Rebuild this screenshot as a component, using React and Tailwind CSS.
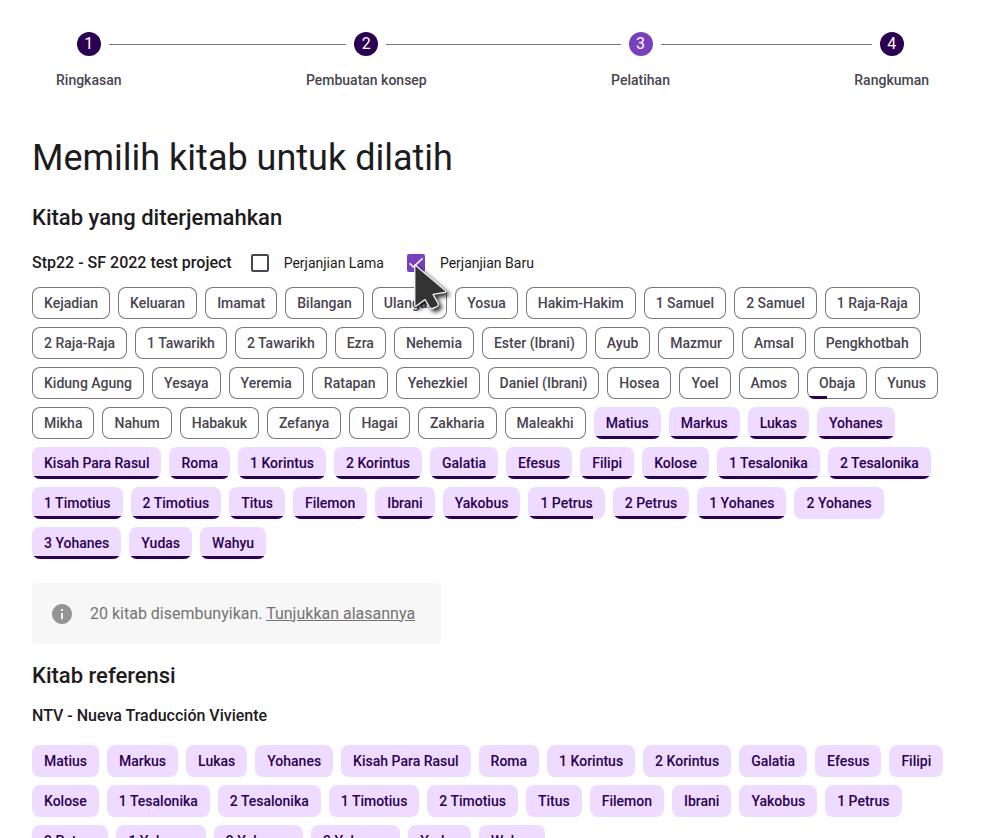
import { useState } from "react";
import { MdInfo } from "react-icons/md";

const STEPS = ["Ringkasan", "Pembuatan konsep", "Pelatihan", "Rangkuman"];
const ACTIVE_STEP = 2;

const OLD_TESTAMENT = [
  "Kejadian", "Keluaran", "Imamat", "Bilangan", "Ulangan", "Yosua", "Hakim-Hakim",
  "1 Samuel", "2 Samuel", "1 Raja-Raja", "2 Raja-Raja", "1 Tawarikh", "2 Tawarikh",
  "Ezra", "Nehemia", "Ester (Ibrani)", "Ayub", "Mazmur", "Amsal", "Pengkhotbah",
  "Kidung Agung", "Yesaya", "Yeremia", "Ratapan", "Yehezkiel", "Daniel (Ibrani)",
  "Hosea", "Yoel", "Amos", "Obaja", "Yunus", "Mikha", "Nahum", "Habakuk", "Zefanya",
  "Hagai", "Zakharia", "Maleakhi",
];

const NEW_TESTAMENT = [
  "Matius", "Markus", "Lukas", "Yohanes", "Kisah Para Rasul", "Roma", "1 Korintus",
  "2 Korintus", "Galatia", "Efesus", "Filipi", "Kolose", "1 Tesalonika",
  "2 Tesalonika", "1 Timotius", "2 Timotius", "Titus", "Filemon", "Ibrani",
  "Yakobus", "1 Petrus", "2 Petrus", "1 Yohanes", "2 Yohanes", "3 Yohanes", "Yudas",
  "Wahyu",
];

// Translated share of each book, in percent, where it is not the default.
const PROGRESS = { Obaja: 33, "1 Petrus": 85, "2 Yohanes": 0 };

function Stepper() {
  return (
    <ol className="flex">
      {STEPS.map((label, i) => {
        const first = i === 0;
        const last = i === STEPS.length - 1;
        return (
          <li key={label} className={last ? "flex" : "flex grow"}>
            <div className="flex flex-col gap-3">
              <div className="flex items-center gap-2">
                <span className={first ? "h-px flex-1" : "h-px flex-1 bg-[#7c7481]"} />
                <span
                  className={
                    "flex size-6 items-center justify-center rounded-full text-base leading-6 text-white " +
                    (i === ACTIVE_STEP ? "bg-[#7a3fbf]" : "bg-[#2b0052]")
                  }
                >
                  {i + 1}
                </span>
                <span className={last ? "h-px flex-1" : "h-px flex-1 bg-[#7c7481]"} />
              </div>
              <span className="px-6 text-sm leading-6 font-medium whitespace-nowrap text-[#4a4550]">
                {label}
              </span>
            </div>
            {!last && (
              <div className="flex h-6 grow items-center">
                <span className="h-px grow bg-[#7c7481]" />
              </div>
            )}
          </li>
        );
      })}
    </ol>
  );
}

function Chip({ label, selected, progress = 0, onClick }) {
  return (
    <button
      type="button"
      aria-pressed={selected}
      onClick={onClick}
      className={
        "relative h-8 overflow-hidden rounded-lg px-3 text-sm font-medium whitespace-nowrap " +
        (selected ? "bg-[#eedbff] text-[#2b0052]" : "text-[#4a4550] ring-1 ring-[#7c7481] ring-inset")
      }
    >
      {label}
      {progress > 0 && (
        <span className="absolute bottom-0 left-0 h-[3px] bg-[#2b0052]" style={{ width: `${progress}%` }} />
      )}
    </button>
  );
}

function Checkbox({ id, label, checked, onChange, children }) {
  return (
    <div className="relative flex items-center">
      <input
        id={id}
        type="checkbox"
        checked={checked}
        onChange={onChange}
        className="size-[18px] appearance-none rounded-xs border-2 border-[#4a4550] checked:border-[#7a3fbf] checked:bg-[#7a3fbf]"
      />
      {checked && (
        <svg
          viewBox="0 0 18 18"
          className="pointer-events-none absolute left-0 size-[18px] fill-none stroke-white stroke-[1.6]"
        >
          <path d="M2.6 9.4 6.4 13 15.6 4.4" />
        </svg>
      )}
      <label htmlFor={id} className="pl-[15px] text-sm leading-5">
        {label}
      </label>
      {children}
    </div>
  );
}

function Pointer() {
  return (
    <svg
      viewBox="0 0 44 56"
      aria-hidden="true"
      className="pointer-events-none absolute top-2 left-1 z-10 h-14 w-11 drop-shadow-[3px_3px_2px_rgba(0,0,0,0.8)]"
    >
      <path
        d="M3.8 3.8 V44.6 Q3.8 46 5.2 45.1 L14 38.6 L18.4 46 Q19.6 48 21.8 47.4 L26 45.6 Q28 44.4 27.2 42.4 L22 33.4 L34 31.4 Q35.6 30.8 34.4 29.6 Z"
        fill="#333333"
        stroke="#ffffff"
        strokeWidth="1.2"
        strokeLinejoin="round"
      />
    </svg>
  );
}

function toggle(list, book) {
  return list.includes(book) ? list.filter((b) => b !== book) : [...list, book];
}

export default function App() {
  const [selected, setSelected] = useState(NEW_TESTAMENT);
  const [reference, setReference] = useState(NEW_TESTAMENT);
  const hasAll = (books) => books.every((b) => selected.includes(b));
  const toggleAll = (books) =>
    setSelected(
      hasAll(books)
        ? selected.filter((b) => !books.includes(b))
        : [...new Set([...selected, ...books])]
    );

  return (
    <div className="h-screen overflow-y-auto bg-white font-[Roboto,sans-serif] text-[#1d1b1e] [scrollbar-width:none]">
      <main className="px-8 py-8">
        <Stepper />

        <h1 className="mt-11 text-4xl leading-[44px]">Memilih kitab untuk dilatih</h1>
        <h2 className="mt-6 text-[22px] leading-7 font-medium">Kitab yang diterjemahkan</h2>

        <div className="mt-[19px] flex items-center gap-[19px]">
          <h3 className="text-base leading-6 font-medium">Stp22 - SF 2022 test project</h3>
          <div className="flex items-center gap-[23px]">
            <Checkbox
              id="old-testament"
              label="Perjanjian Lama"
              checked={hasAll(OLD_TESTAMENT)}
              onChange={() => toggleAll(OLD_TESTAMENT)}
            />
            <Checkbox
              id="new-testament"
              label="Perjanjian Baru"
              checked={hasAll(NEW_TESTAMENT)}
              onChange={() => toggleAll(NEW_TESTAMENT)}
            >
              <Pointer />
            </Checkbox>
          </div>
        </div>

        <div className="mt-3 flex flex-wrap gap-2">
          {[...OLD_TESTAMENT, ...NEW_TESTAMENT].map((book) => (
            <Chip
              key={book}
              label={book}
              selected={selected.includes(book)}
              progress={PROGRESS[book] ?? (NEW_TESTAMENT.includes(book) ? 100 : 0)}
              onClick={() => setSelected(toggle(selected, book))}
            />
          ))}
        </div>

        <div className="mt-6 flex min-h-[61px] w-fit items-center gap-4 rounded-sm bg-[#f7f7f7] pr-[26px] pl-[18px] text-[#737373]">
          <MdInfo className="size-6 text-[#949494]" />
          <p className="text-base leading-6">
            20 kitab disembunyikan.{" "}
            <a href="#hidden-books" className="underline">
              Tunjukkan alasannya
            </a>
          </p>
        </div>

        <h2 className="mt-[18px] text-[22px] leading-7 font-medium">Kitab referensi</h2>
        <h3 className="mt-[14px] text-base leading-6 font-medium">NTV - Nueva Traducción Viviente</h3>
        <div className="mt-[17px] flex flex-wrap gap-2">
          {NEW_TESTAMENT.map((book) => (
            <Chip
              key={book}
              label={book}
              selected={reference.includes(book)}
              onClick={() => setReference(toggle(reference, book))}
            />
          ))}
        </div>
      </main>
    </div>
  );
}
